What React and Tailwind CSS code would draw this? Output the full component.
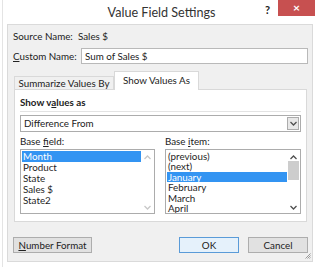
import React from 'react';

const Up = ({ c = '#606060' }) => (
  <svg width="7" height="5" viewBox="0 0 7 5"><path d="M0.5 4 L3.5 1 L6.5 4" fill="none" stroke={c} strokeWidth="1.3" /></svg>
);
const Down = ({ c = '#606060' }) => (
  <svg width="7" height="5" viewBox="0 0 7 5"><path d="M0.5 1 L3.5 4 L6.5 1" fill="none" stroke={c} strokeWidth="1.3" /></svg>
);

const ListBox = ({ items, selected, width, active, row }) => (
  <div className={`flex h-[65px] border border-[#acacac] bg-white ${width}`}>
    <div className="flex-1 overflow-hidden pl-[1px] pt-[1px]">
      {items.map((it) => (
        <div
          key={it}
          className={`pl-[1px] ${row} ${it === selected ? 'bg-[#3394f2] text-white' : 'text-[#1e1e1e]'}`}
        >
          {it}
        </div>
      ))}
    </div>
    <div className="flex w-[13px] flex-col items-center bg-white pb-[3px] pt-[5px]">
      <Up c={active ? '#505050' : '#c8c8c8'} />
      {active ? <div className="mt-[1px] h-[19px] w-[11px] bg-[#cdcdcd]" /> : null}
      <div className="flex-1" />
      <Down c={active ? '#505050' : '#c8c8c8'} />
    </div>
  </div>
);

export default function App() {
  return (
    <div className="h-[267px] w-[320px] overflow-hidden whitespace-nowrap bg-white pl-[2px] text-[9.8px] text-[#222]" style={{ fontFamily: 'Lato, "Open Sans", sans-serif' }}>
      <div className="flex h-full flex-col border-l border-[#e4e4e4]">
        {/* title bar */}
        <div className="flex h-[24px]">
          <div className="flex-1" />
          <div className="pt-[4px] text-[12.6px] text-[#333]">Value Field Settings</div>
          <div className="flex flex-1 justify-end">
            <div className="pr-[8px] pt-[2px] text-[11px] font-bold text-[#222]">?</div>
            <div className="mr-[5px] flex h-[16px] w-[37px] items-center justify-center bg-[#c75050] text-[12px] font-bold text-white">×</div>
          </div>
        </div>

        {/* client area */}
        <div className="ml-[4px] flex h-[238px] w-[306px] flex-col border border-[#dadada] bg-[#f0f0f0] pl-[5px]">
          <div className="flex h-[22px] items-center">
            <span className="w-[65px]">Source Name:</span>
            <span>Sales $</span>
          </div>
          <div className="mt-[1px] flex h-[16px] items-center">
            <span className="w-[68px]"><u>C</u>ustom Name:</span>
            <div className="flex h-[16px] w-[227px] items-center border border-[#b9b9b9] bg-white pl-[3px]">Sum of Sales $</div>
          </div>

          {/* tabs */}
          <div className="ml-[1px] mt-[7px] flex h-[18px] items-end">
            <div className="flex h-[13px] w-[100px] items-center justify-center border border-b-0 border-[#d9d9d9] bg-[#f0f0f0]">Summarize Values By</div>
            <div className="relative z-10 -mb-[1px] flex h-[19px] w-[85px] items-center justify-center border border-b-0 border-[#d9d9d9] bg-white pb-[1px]">Show Values As</div>
          </div>

          {/* panel */}
          <div className="ml-[1px] flex h-[133px] w-[293px] flex-col border border-[#d9d9d9] bg-white pl-[5px]">
            <div className="flex h-[20px] items-center pt-[5px] font-bold">Show v<u>a</u>lues as</div>
            <div className="mr-[5px] mt-[1px] h-px bg-[#e3e3e3]" />
            <div className="mt-[3px] flex h-[17px] w-[281px] items-center border border-[#acacac] bg-white">
              <span className="flex-1 pl-[3px]">Difference From</span>
              <div className="mr-[1px] flex h-[13px] w-[12px] items-center justify-center border border-[#acacac] bg-[#e8e8e8]">
                <Down c="#505050" />
              </div>
            </div>
            <div className="flex h-[17px] items-center pt-[1px]">
              <span className="w-[145px]">Base <u>f</u>ield:</span>
              <span>Base <u>i</u>tem:</span>
            </div>
            <div className="flex gap-[10px]">
              <ListBox width="w-[135px]" row="h-[11px] leading-[11px]" items={['Month', 'Product', 'State', 'Sales $', 'State2']} selected="Month" />
              <ListBox width="w-[136px]" row="h-[10.4px] leading-[10.4px]" items={['(previous)', '(next)', 'January', 'February', 'March', 'April']} selected="January" active />
            </div>
          </div>

          {/* buttons */}
          <div className="mt-[15px] flex h-[16px] pr-[4px]">
            <div className="flex w-[79px] items-center justify-center border border-[#adadad] bg-[#e1e1e1]"><u>N</u>umber Format</div>
            <div className="flex-1" />
            <div className="flex w-[60px] items-center justify-center border border-[#5a9bd8] bg-[#e5f1fb]">OK</div>
            <div className="ml-[9px] flex w-[60px] items-center justify-center border border-[#adadad] bg-[#e1e1e1]">Cancel</div>
          </div>
          <div className="flex flex-1 items-end justify-end pb-[2px] pr-[1px]">
            <svg width="6" height="6" viewBox="0 0 6 6">
              <path d="M5.5 0.5 L0.5 5.5 M5.5 2.5 L2.5 5.5 M5.5 4.5 L4.5 5.5" stroke="#9a9a9a" strokeWidth="1" />
            </svg>
          </div>
        </div>
      </div>
    </div>
  );
}
